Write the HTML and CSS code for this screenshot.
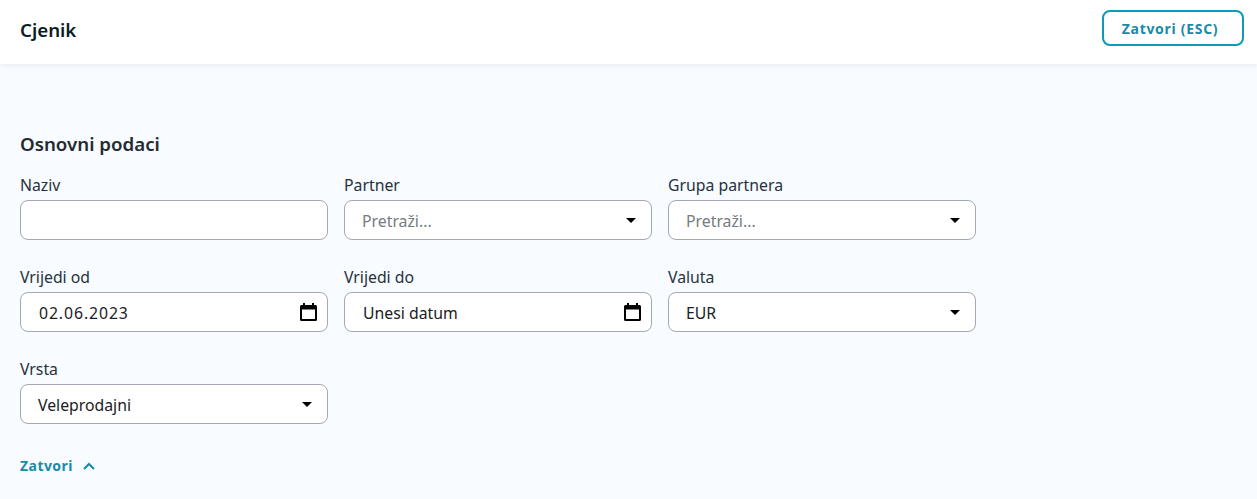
FILE: index.html
```html
<!DOCTYPE html>
<html lang="hr">
<head>
<meta charset="utf-8">
<title>Cjenik</title>
<link rel="stylesheet" href="styles.css">
</head>
<body>
<header class="topbar">
  <h1 class="page-title">Cjenik</h1>
  <button class="btn-close" type="button">Zatvori (ESC)</button>
</header>
<main class="content">
  <h2 class="section-title">Osnovni podaci</h2>
  <div class="form-grid">
    <div class="field"><label class="label">Naziv</label><div class="control"></div></div>
    <div class="field"><label class="label">Partner</label><div class="control control-select"><span class="placeholder">Pretraži...</span><svg class="caret" viewBox="0 0 10 5"><path d="M0 0h10L5 5z"/></svg></div></div>
    <div class="field"><label class="label">Grupa partnera</label><div class="control control-select"><span class="placeholder">Pretraži...</span><svg class="caret" viewBox="0 0 10 5"><path d="M0 0h10L5 5z"/></svg></div></div>
    <div class="field"><label class="label">Vrijedi od</label><div class="control control-date"><span class="value value-digits">02.06.2023</span><svg class="cal" viewBox="0 0 17 18"><path d="M3 0h2v2h7V0h2v2h1.500A1.500 1.500 0 0 1 17 3.500v13a1.500 1.500 0 0 1-1.500 1.500h-14A1.500 1.500 0 0 1 0 16.500v-13A1.500 1.500 0 0 1 1.500 2H3zM2 6.500V16h13V6.500z"/></svg></div></div>
    <div class="field"><label class="label">Vrijedi do</label><div class="control control-date"><span class="value">Unesi datum</span><svg class="cal" viewBox="0 0 17 18"><path d="M3 0h2v2h7V0h2v2h1.500A1.500 1.500 0 0 1 17 3.500v13a1.500 1.500 0 0 1-1.500 1.500h-14A1.500 1.500 0 0 1 0 16.500v-13A1.500 1.500 0 0 1 1.500 2H3zM2 6.500V16h13V6.500z"/></svg></div></div>
    <div class="field"><label class="label">Valuta</label><div class="control control-select"><span class="value">EUR</span><svg class="caret" viewBox="0 0 10 5"><path d="M0 0h10L5 5z"/></svg></div></div>
    <div class="field"><label class="label">Vrsta</label><div class="control control-select"><span class="value">Veleprodajni</span><svg class="caret" viewBox="0 0 10 5"><path d="M0 0h10L5 5z"/></svg></div></div>
  </div>
  <button class="toggle" type="button">Zatvori<svg class="chevron" viewBox="0 0 12 8"><path d="M1 7l5-5 5 5"/></svg></button>
</main>
</body>
</html>
```
FILE: styles.css
```css
* { box-sizing: border-box; }
html, body { height: 100%; }
body {
  margin: 0;
  background: #f8fbff;
  color: #1f2a33;
  font-family: "Noto Sans", sans-serif;
  font-size: 15.8px;
  overflow: hidden;
}
.topbar {
  height: 64px;
  background: #fff;
  display: flex;
  align-items: center;
  justify-content: space-between;
  padding: 0 13px 6px 20px;
  box-shadow: 0 1px 6px rgba(30, 40, 80, .08);
}
.page-title {
  margin: 0;
  font-size: 18.7px;
  font-weight: 600;
  color: #0b1a24;
}
.btn-close {
  width: 142px;
  height: 36px;
  margin-bottom: 2px;
  background: #fff;
  border: 2px solid #0b9ab8;
  border-radius: 8px;
  color: #1a8aa8;
  font: 700 14px "Noto Sans", sans-serif;
  letter-spacing: .7px;
  padding: 0 6px 0 0;
}
.content { padding: 67px 20px 0; }
.section-title {
  margin: 0 0 18px;
  font-size: 18.7px;
  line-height: 26px;
  font-weight: 600;
  color: #232b30;
}
.form-grid {
  display: grid;
  grid-template-columns: repeat(3, 308px);
  column-gap: 16px;
  row-gap: 27px;
}
.label {
  display: block;
  margin-bottom: 5px;
  line-height: 20px;
  color: #25323b;
}
.control {
  height: 40px;
  background: #fff;
  border: 1px solid #a3a8b2;
  border-radius: 8px;
  display: flex;
  align-items: center;
  justify-content: space-between;
  padding: 0 17px;
}
.control-date { padding: 0 10px 0 18px; }
.control-select { padding-right: 15px; }
.placeholder, .value { position: relative; top: 1px; }
.placeholder { color: #757b80; }
.value { color: #1a2024; }
.value-digits { letter-spacing: .9px; }
.caret { width: 10px; height: 5px; fill: #000; }
.cal { width: 17px; height: 18px; fill: #000; }
.toggle {
  display: flex;
  align-items: center;
  gap: 10px;
  margin-top: 32px;
  padding: 0;
  background: none;
  border: 0;
  color: #1a8aa8;
  font: 700 14px "Noto Sans", sans-serif;
  letter-spacing: .45px;
}
.chevron { width: 12px; height: 8px; fill: none; stroke: #1a8aa8; stroke-width: 2; }
```
